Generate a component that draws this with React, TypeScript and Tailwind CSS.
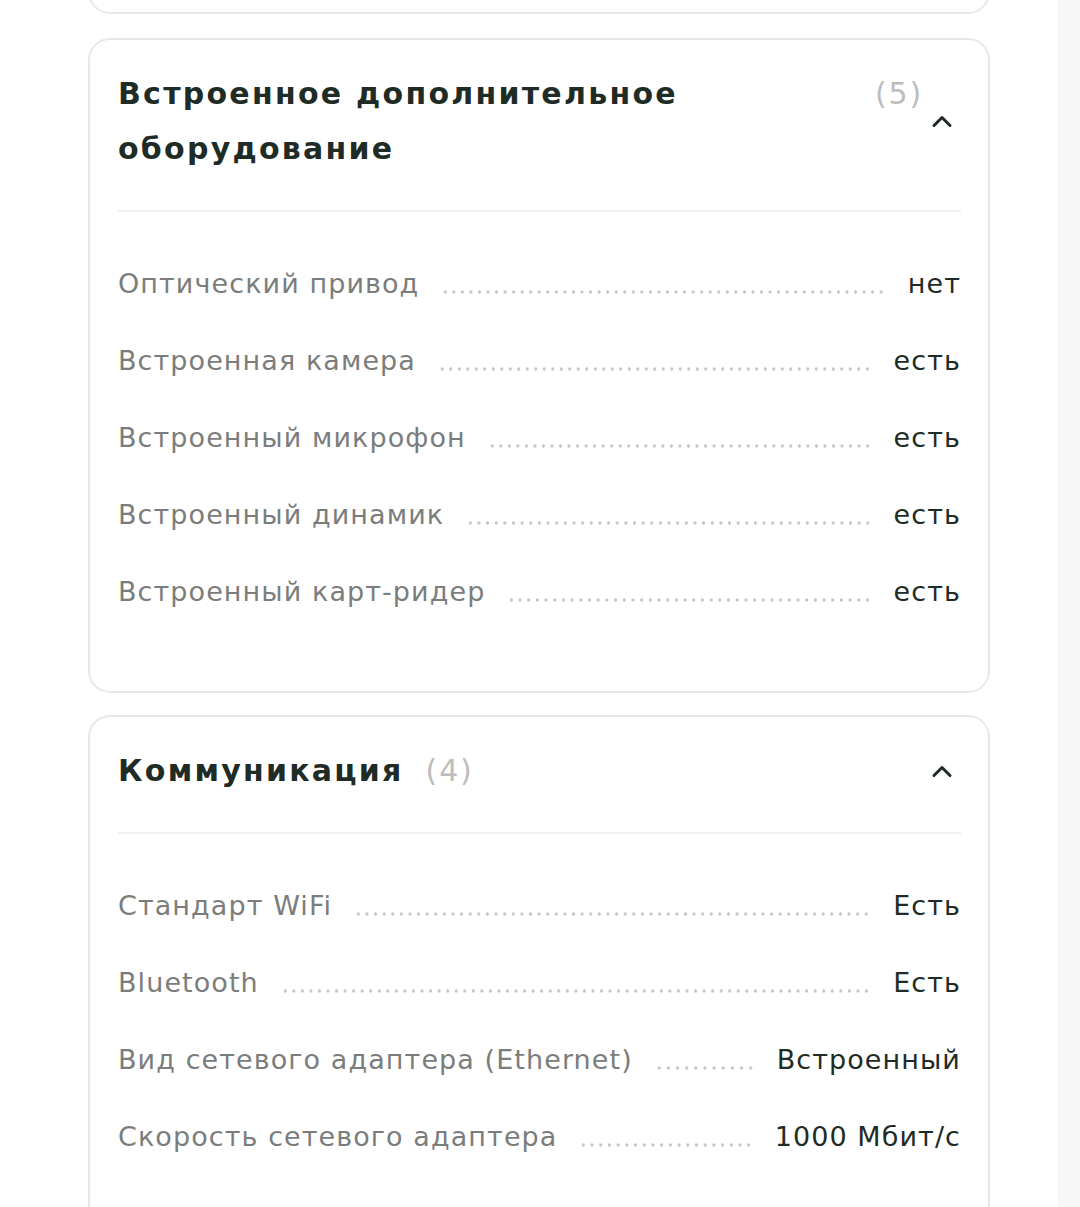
import React from 'react'

type Spec = { label: string; value: string }

const hardware: Spec[] = [
  { label: 'Оптический привод', value: 'нет' },
  { label: 'Встроенная камера', value: 'есть' },
  { label: 'Встроенный микрофон', value: 'есть' },
  { label: 'Встроенный динамик', value: 'есть' },
  { label: 'Встроенный карт-ридер', value: 'есть' },
]

const comms: Spec[] = [
  { label: 'Стандарт WiFi', value: 'Есть' },
  { label: 'Bluetooth', value: 'Есть' },
  { label: 'Вид сетевого адаптера (Ethernet)', value: 'Встроенный' },
  { label: 'Скорость сетевого адаптера', value: '1000 Мбит/с' },
]

function Chevron() {
  return (
    <svg width="22" height="14" viewBox="0 0 22 14" fill="none">
      <path d="M3 11.5 L11 3.5 L19 11.5" stroke="#1f2b25" strokeWidth="3" strokeLinecap="round" strokeLinejoin="round" />
    </svg>
  )
}

function Row({ label, value }: Spec) {
  return (
    <div className="flex h-[77px] items-center">
      <div className="flex w-full items-baseline">
        <span className="shrink-0 text-[27px] tracking-[0.04em] text-[#7b7d7c]">{label}</span>
        <div className="mx-[22px] h-[4px] min-w-0 flex-1 translate-y-[1px] bg-[radial-gradient(circle,#c6c6c6_1.4px,transparent_1.9px)] bg-[length:8.5px_4px] bg-repeat-space" />
        <span className="shrink-0 text-[27px] tracking-[0.04em] text-[#1f2b25]">{value}</span>
      </div>
    </div>
  )
}

function Section({ title, count, items }: { title: string; count: number; items: Spec[] }) {
  return (
    <section className="w-[902px] rounded-[22px] border-2 border-[#e8e8e8] bg-white pl-[28px] pr-[27px]">
      <div className="flex items-center pt-[26px] pb-[34px]">
        <div className="flex flex-1 items-start gap-[22px]">
          <h2 className="text-[30px] font-bold leading-[55px] tracking-[0.075em] text-[#1f2b25]">{title}</h2>
          <span className="shrink-0 text-[30px] leading-[55px] tracking-[0.06em] text-[#bdbdbd]">({count})</span>
        </div>
        <div className="flex w-[38px] shrink-0 justify-center">
          <Chevron />
        </div>
      </div>
      <div className="h-[2px] bg-[#f0f0f0]" />
      <div className="pt-[34px] pb-[60px]">
        {items.map((s) => (
          <Row key={s.label} {...s} />
        ))}
      </div>
    </section>
  )
}

export default function App() {
  return (
    <div className="flex h-[1207px] w-[1080px] overflow-hidden bg-white font-['DejaVu_Sans','Noto_Sans',sans-serif]">
      <main className="w-[1058px] shrink-0 pl-[88px]">
        <div className="-mt-[86px] h-[100px] w-[902px] rounded-[22px] border-2 border-[#e8e8e8]" />
        <div className="mt-[24px] flex flex-col gap-[22px]">
          <Section title="Встроенное дополнительное оборудование" count={5} items={hardware} />
          <Section title="Коммуникация" count={4} items={comms} />
        </div>
      </main>
      <div className="flex-1 bg-[#f7f7f7]" />
    </div>
  )
}
